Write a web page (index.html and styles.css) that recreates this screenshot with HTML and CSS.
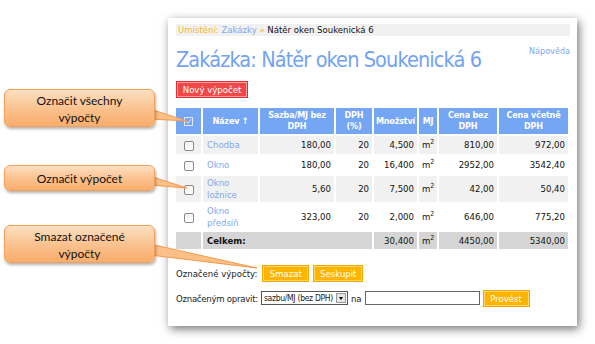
FILE: index.html
```html
<!DOCTYPE html>
<html lang="cs">
<head>
  <meta charset="UTF-8" />
  <title>Zakázka: Nátěr oken Soukenická 6</title>
  <link rel="stylesheet" href="styles.css">
</head>
<body>
  <div class="Shot">
    <div class="Crumbs">
      <span class="lbl">Umístění:</span> <a href="#">Zakázky</a> <span class="sep">»</span> <span class="here">Nátěr oken Soukenická 6</span>
    </div>
    <div class="Head">
      <h1>Zakázka: Nátěr oken Soukenická 6</h1>
      <a class="help" href="#">Nápověda</a>
    </div>
    <button class="btn red">Nový výpočet</button>

    <table class="Calc">
      <thead>
        <tr>
          <th class="c-cb">
            <svg width="9" height="9" viewBox="0 0 9 9"><rect x="0.5" y="0.5" width="8" height="8" fill="none" stroke="#dde8fb"/><path d="M2 4.5 L3.8 6.3 L7 2.2" fill="none" stroke="#dde8fb" stroke-width="1"/></svg>
          </th>
          <th class="c-name">Název ↑</th>
          <th class="c-rate">Sazba/MJ bez DPH</th>
          <th class="c-vat">DPH (%)</th>
          <th class="c-qty">Množství</th>
          <th class="c-mj">MJ</th>
          <th class="c-p1">Cena bez DPH</th>
          <th class="c-p2">Cena včetně DPH</th>
        </tr>
      </thead>
      <tbody>
        <tr class="odd">
          <td class="c-cb"><span class="cb"></span></td>
          <td><a href="#">Chodba</a></td>
          <td class="num">180,00</td><td class="num">20</td><td class="num">4,500</td>
          <td class="mj">m<sup>2</sup></td><td class="num">810,00</td><td class="num">972,00</td>
        </tr>
        <tr>
          <td class="c-cb"><span class="cb"></span></td>
          <td><a href="#">Okno</a></td>
          <td class="num">180,00</td><td class="num">20</td><td class="num">16,400</td>
          <td class="mj">m<sup>2</sup></td><td class="num">2952,00</td><td class="num">3542,40</td>
        </tr>
        <tr class="odd">
          <td class="c-cb"><span class="cb"></span></td>
          <td><a href="#">Okno<br>ložnice</a></td>
          <td class="num">5,60</td><td class="num">20</td><td class="num">7,500</td>
          <td class="mj">m<sup>2</sup></td><td class="num">42,00</td><td class="num">50,40</td>
        </tr>
        <tr>
          <td class="c-cb"><span class="cb"></span></td>
          <td><a href="#">Okno<br>předsíň</a></td>
          <td class="num">323,00</td><td class="num">20</td><td class="num">2,000</td>
          <td class="mj">m<sup>2</sup></td><td class="num">646,00</td><td class="num">775,20</td>
        </tr>
        <tr class="total">
          <td></td>
          <td colspan="3" class="sum">Celkem:</td>
          <td class="num">30,400</td>
          <td class="mj">m<sup>2</sup></td><td class="num">4450,00</td><td class="num">5340,00</td>
        </tr>
      </tbody>
    </table>

    <div class="Actions first">
      <span>Označené výpočty:</span>
      <button class="btn orange w47">Smazat</button>
      <button class="btn orange w50">Seskupit</button>
    </div>
    <div class="Actions second">
      <span class="tight">Označeným opravit:</span>
      <span class="select">sazbu/MJ (bez DPH)<span class="arrow"></span></span>
      <span>na</span>
      <span class="input"></span>
      <button class="btn orange w47">Provést</button>
    </div>
  </div>

  <svg class="Wedges" width="595" height="344" viewBox="0 0 595 344">
    <polygon points="150,109 150,119 187,121" />
    <polygon points="150,176 150,185 187,188" />
    <polygon points="150,244 150,255 257,268" />
  </svg>

  <div class="Note n1">Označit všechny<br>výpočty</div>
  <div class="Note n2">Označit výpočet</div>
  <div class="Note n3">Smazat označené<br>výpočty</div>
</body>
</html>
```

FILE: styles.css
```css
* {
  box-sizing: border-box;
}
html, body {
  margin: 0;
  padding: 0;
  width: 595px;
  height: 344px;
  background: #fff;
  overflow: hidden;
}
body {
  position: relative;
  font-family: "DejaVu Sans Condensed", "DejaVu Sans", sans-serif;
}

.Shot {
  margin: 18px 0 0 168px;
  width: 409px;
  height: 308px;
  padding: 6px 7px 0 8px;
  background: #fff;
  box-shadow: 2px 3px 9px rgba(0, 0, 0, 0.55);
  font-size: 9.5px;
  color: #222;
}
.Shot a {
  color: #7fa8f0;
  text-decoration: none;
}

.Crumbs {
  background: #f1f1f1;
  height: 12px;
  line-height: 12px;
  padding-left: 2px;
}
.Crumbs .lbl,
.Crumbs .sep {
  color: #f7b62e;
}
.Crumbs .here {
  color: #111;
}

.Head {
  display: flex;
  justify-content: space-between;
  align-items: flex-start;
  margin-top: 8px;
  height: 31px;
}
.Head h1 {
  margin: 0;
  font-weight: normal;
  font-size: 21.5px;
  line-height: 31px;
  letter-spacing: -0.9px;
  color: #72a3f3;
}
.Head .help {
  margin-top: 2px;
  font-size: 9px;
}

.btn {
  display: inline-block;
  height: 17px;
  padding: 0 4px;
  font-family: inherit;
  font-size: 9.5px;
  line-height: 13px;
  color: #fff;
  cursor: pointer;
}
.btn.red {
  width: 72px;
  margin-top: 6px;
  background: #f04848;
  border: 1px solid #e62c2c;
  box-shadow: inset 0 0 0 1px #f9a0a0;
}
.btn.orange {
  background: #ffb400;
  border: 1px solid #f5a600;
  box-shadow: inset 0 0 0 1px #ffd66a;
}
.w47 { width: 47px; }
.w50 { width: 50px; }

.Calc {
  margin: 8px 0 0 -2px;
  border-collapse: separate;
  border-spacing: 2px;
  table-layout: fixed;
  width: 396px;
}
.Calc th {
  background: #74a6f4;
  color: #fff;
  font-size: 9px;
  line-height: 11px;
  letter-spacing: -0.2px;
  padding: 2px 1px;
  height: 26px;
  text-align: center;
}
.Calc th.c-cb svg {
  display: block;
  margin: 0 auto;
}
.c-cb { width: 25px; }
.c-name { width: 55px; }
.c-rate { width: 74px; }
.c-vat { width: 36px; }
.c-qty { width: 43px; }
.c-mj { width: 18px; }
.c-p1 { width: 58px; }
.c-p2 { width: 69px; }

.Calc td {
  font-size: 9.5px;
  line-height: 12px;
  padding: 1px 3px 1px 4px;
  height: 18px;
  color: #111;
}
.Calc tr.odd td {
  background: #f1f1f1;
}
.Calc tr.total td {
  background: #d5d5d5;
  height: 17px;
}
.Calc td.c-cb {
  text-align: center;
  padding: 0;
}
.Calc td.num {
  text-align: right;
}
.Calc td.mj {
  padding-left: 3px;
}
.Calc td.sum {
  font-weight: bold;
}
.Calc sup {
  font-size: 7px;
  line-height: 0;
  vertical-align: 4px;
}
.cb {
  display: inline-block;
  width: 10px;
  height: 10px;
  border: 1px solid #8a8a8a;
  border-radius: 2px;
  background: linear-gradient(#f4f4f4, #fff);
  vertical-align: middle;
}

.Actions {
  display: flex;
  align-items: center;
  gap: 4px;
  height: 18px;
}
.Actions.first {
  margin-top: 13px;
}
.Actions.first span {
  margin-right: 1px;
}
.Actions.second {
  margin-top: 7px;
  gap: 3px;
}
.Actions .tight {
  letter-spacing: -0.25px;
}
.select {
  position: relative;
  display: inline-block;
  width: 87px;
  height: 14px;
  border: 1px solid #555;
  padding: 0 0 0 2px;
  line-height: 12px;
  font-size: 8.5px;
  letter-spacing: -0.3px;
  white-space: nowrap;
  overflow: hidden;
  background: #fff;
}
.select .arrow {
  position: absolute;
  top: 1px;
  right: 1px;
  width: 10px;
  height: 10px;
  background: #e6e6e6;
  border: 1px solid #999;
}
.select .arrow::after {
  content: "";
  position: absolute;
  left: 2px;
  top: 3px;
  border-left: 2.5px solid transparent;
  border-right: 2.5px solid transparent;
  border-top: 3px solid #000;
}
.input {
  display: inline-block;
  width: 115px;
  height: 14px;
  border: 1px solid #666;
  background: #fff;
}

.Wedges {
  position: absolute;
  left: 0;
  top: 0;
  pointer-events: none;
}
.Wedges polygon {
  fill: #fbbf88;
  stroke: #f59a4e;
  stroke-width: 1;
}

.Note {
  position: absolute;
  left: 4px;
  width: 151px;
  border: 1px solid #f3a15a;
  border-radius: 6px;
  background: linear-gradient(#fde0c2, #fac08c 55%, #f9ae6c);
  box-shadow: 1px 2px 3px rgba(0, 0, 0, 0.3);
  font-family: Lato, "Open Sans", sans-serif;
  font-size: 12px;
  line-height: 17px;
  color: #111;
  text-align: center;
}
.n1 { top: 89px; height: 38px; padding-top: 2px; }
.n2 { top: 165px; height: 26px; padding-top: 4px; }
.n3 { top: 225px; height: 38px; padding-top: 2px; }
```
